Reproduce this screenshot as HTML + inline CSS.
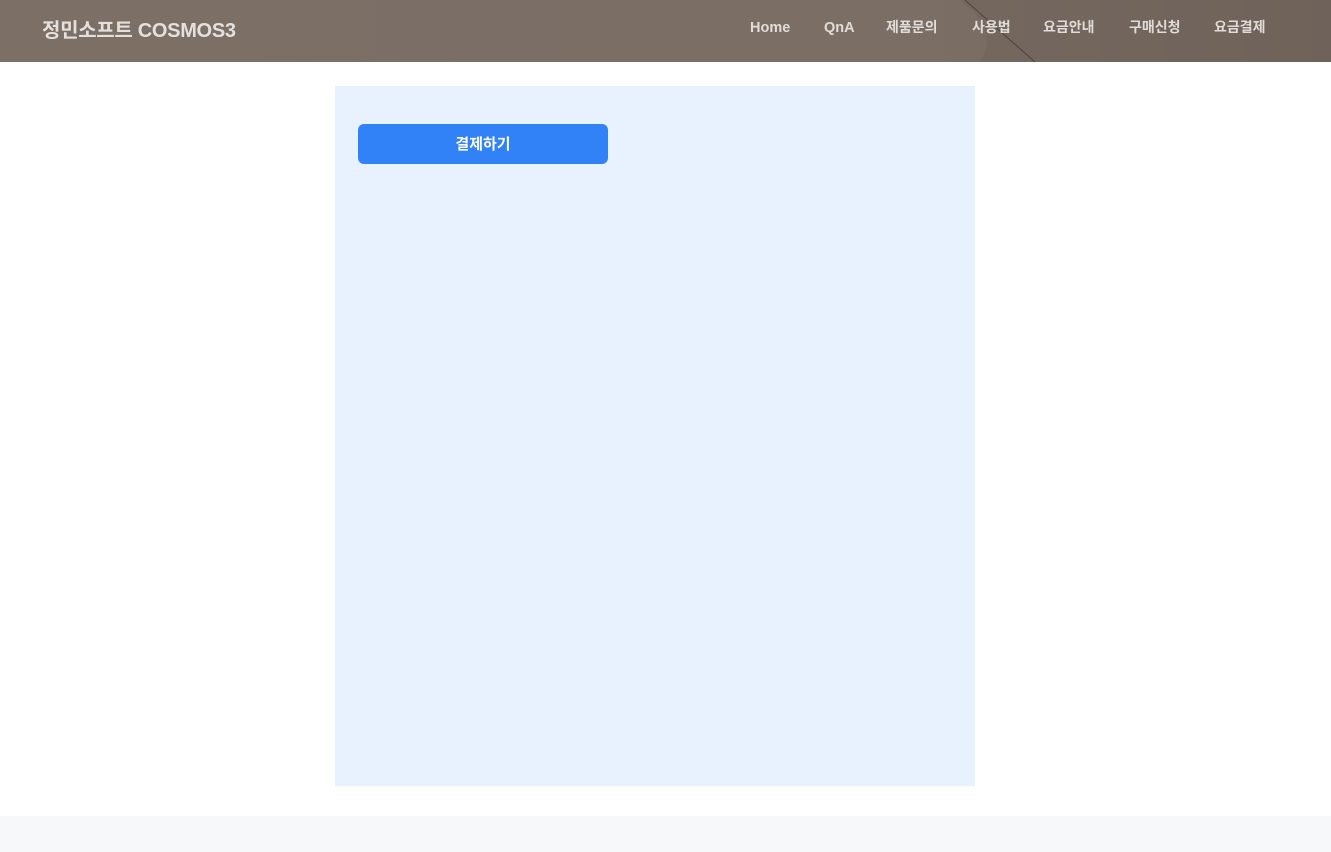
<!DOCTYPE html>
<html><head><meta charset="utf-8"><style>
body{margin:0;width:1331px;height:852px;background:#fff;font-family:"Liberation Sans","Noto Sans CJK KR",sans-serif;position:relative;overflow:hidden}
.hdr{position:absolute;left:0;top:0;width:1331px;height:62px;background:linear-gradient(90deg,#7b6f66 0%,#7a6e65 70%,#6f635a 100%);overflow:hidden}
.logo{position:absolute;left:42px;top:14px;color:#e6e0dc;font-size:20px;font-weight:bold;letter-spacing:-0.3px}
.nav{position:absolute;top:18px;line-height:18px;color:#e2dcd8;font-size:14px;font-weight:bold}
.lat{top:19px;font-size:14.5px}
.panel{position:absolute;left:335px;top:86px;width:640px;height:700px;background:#e8f2ff}
.btn{position:absolute;left:358px;top:124px;width:250px;height:40px;background:#3182f6;border-radius:6px;color:#fff;font-weight:bold;font-size:15px;text-align:center;line-height:41px}
.foot{position:absolute;left:0;top:816px;width:1331px;height:36px;background:#f6f8fa}
</style></head><body>
<div class="hdr">
<svg width="1331" height="62" style="position:absolute;left:0;top:0"><path d="M960 0 Q1000 30 980 62 L1331 62 L1331 0Z" fill="#6e6259" opacity="0.5"/><line x1="965" y1="0" x2="1035" y2="62" stroke="#4e443d" stroke-width="1"/></svg>
<div class="logo">정민소프트 COSMOS3</div>
<span class="nav lat" style="left:750px">Home</span>
<span class="nav lat" style="left:824px">QnA</span>
<span class="nav" style="left:886px">제품문의</span>
<span class="nav" style="left:972px">사용법</span>
<span class="nav" style="left:1043px">요금안내</span>
<span class="nav" style="left:1129px">구매신청</span>
<span class="nav" style="left:1214px">요금결제</span>
</div>
<div class="panel"></div>
<div class="btn">결제하기</div>
<div class="foot"></div>
</body></html>
